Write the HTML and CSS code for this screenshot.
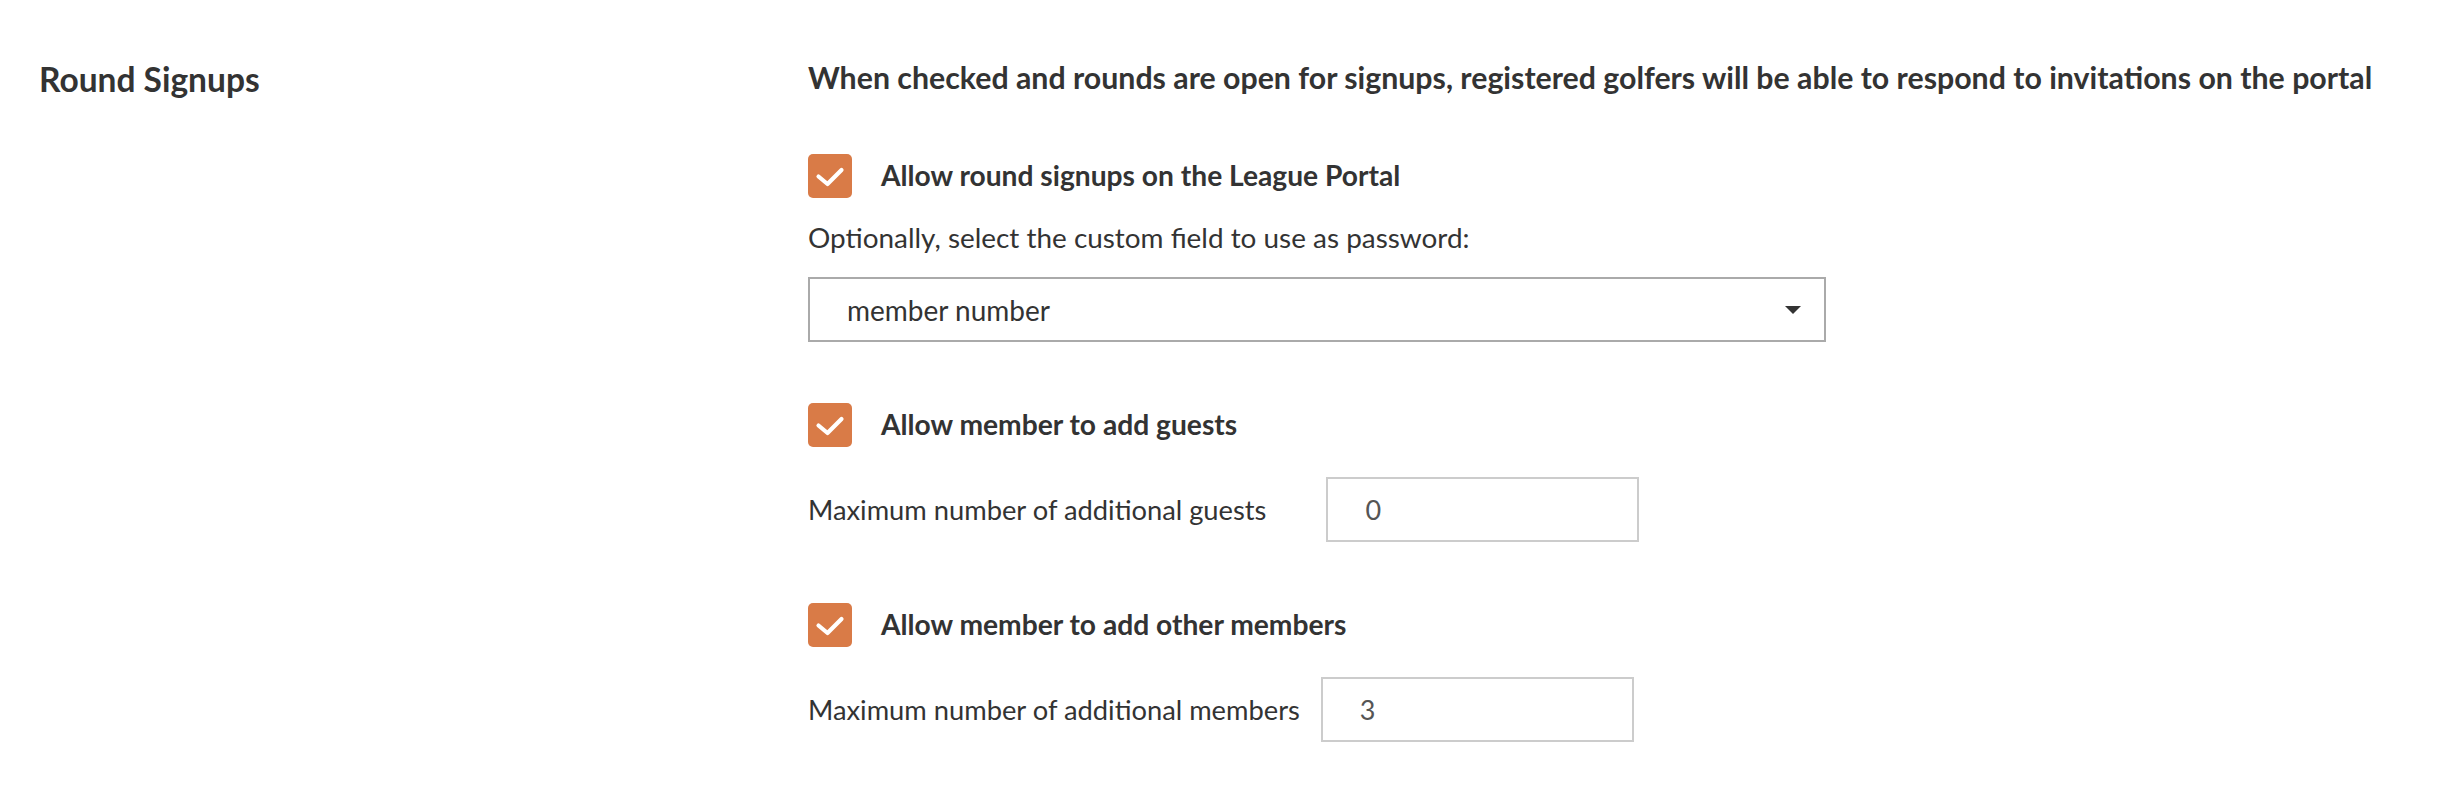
FILE: index.html
```html
<!DOCTYPE html>
<html lang="en">
<head>
<meta charset="utf-8">
<title>Round Signups</title>
<link rel="stylesheet" href="styles.css">
</head>
<body>
<section class="settings-section">
  <h2 class="section-title">Round Signups</h2>
  <div class="section-body">
    <p class="section-desc">When checked and rounds are open for signups, registered golfers will be able to respond to invitations on the portal</p>

    <label class="check-row check-row--first">
      <span class="checkbox"><svg viewBox="0 0 44 44" width="44" height="44"><path d="M10.5 22.5 L19.5 30 L33.5 16" fill="none" stroke="#fff" stroke-width="4.2" stroke-linecap="round" stroke-linejoin="round"/></svg></span>
      <span class="check-label">Allow round signups on the League Portal</span>
    </label>
    <p class="field-hint">Optionally, select the custom field to use as password:</p>
    <div class="select-box">
      <span class="select-value">member number</span>
      <span class="select-arrow"></span>
    </div>

    <label class="check-row">
      <span class="checkbox"><svg viewBox="0 0 44 44" width="44" height="44"><path d="M10.5 22.5 L19.5 30 L33.5 16" fill="none" stroke="#fff" stroke-width="4.2" stroke-linecap="round" stroke-linejoin="round"/></svg></span>
      <span class="check-label">Allow member to add guests</span>
    </label>
    <div class="number-row">
      <span class="number-label">Maximum number of additional guests</span>
      <input class="number-input number-input--guests" type="text" value="0">
    </div>

    <label class="check-row">
      <span class="checkbox"><svg viewBox="0 0 44 44" width="44" height="44"><path d="M10.5 22.5 L19.5 30 L33.5 16" fill="none" stroke="#fff" stroke-width="4.2" stroke-linecap="round" stroke-linejoin="round"/></svg></span>
      <span class="check-label">Allow member to add other members</span>
    </label>
    <div class="number-row">
      <span class="number-label">Maximum number of additional members</span>
      <input class="number-input number-input--members" type="text" value="3">
    </div>
  </div>
</section>
</body>
</html>
```

FILE: styles.css
```css
html, body {
  margin: 0;
  padding: 0;
  background: #ffffff;
}

body {
  font-family: "Lato", "Noto Sans", sans-serif;
  color: #333333;
}

.settings-section {
  display: flex;
  align-items: flex-start;
  padding: 61px 0 0 39px;
}

.section-title {
  width: 769px;
  flex: none;
  margin: 0;
  font-size: 33.5px;
  line-height: 36px;
  font-weight: 700;
  color: #333333;
}

.section-body {
  flex: 1;
  display: flex;
  flex-direction: column;
  align-items: flex-start;
}

.section-desc {
  margin: 0;
  font-size: 30.3px;
  line-height: 32px;
  font-weight: 700;
  color: #333333;
}

.check-row {
  display: flex;
  align-items: center;
  gap: 29px;
  margin-top: 61px;
}

.checkbox {
  width: 44px;
  height: 44px;
  border-radius: 5px;
  background: #d97b47;
  display: flex;
  flex: none;
}

.check-label {
  font-size: 28.2px;
  line-height: 32px;
  padding-bottom: 3px;
  font-weight: 700;
  color: #333333;
}

.field-hint {
  margin: 23px 0 0;
  font-size: 27.9px;
  line-height: 32px;
  font-weight: 400;
  color: #333333;
}

.select-box {
  margin-top: 24px;
  box-sizing: border-box;
  width: 1018px;
  height: 65px;
  border: 2px solid #aaaaaa;
  display: flex;
  align-items: center;
  justify-content: space-between;
  padding: 0 23px 0 37px;
}

.select-value {
  font-size: 28px;
  color: #333333;
}

.select-arrow {
  width: 0;
  height: 0;
  border-left: 8px solid transparent;
  border-right: 8px solid transparent;
  border-top: 8px solid #333333;
}

.number-row {
  display: flex;
  align-items: center;
  margin-top: 30px;
}

.number-label {
  font-size: 27.3px;
  line-height: 32px;
  color: #333333;
}

.number-input {
  box-sizing: border-box;
  width: 313px;
  height: 65px;
  border: 2px solid #cccccc;
  border-radius: 0;
  padding: 0 0 0 37px;
  font-family: "Lato", "Noto Sans", sans-serif;
  font-size: 27px;
  color: #555555;
  background: #ffffff;
  outline: none;
}

.number-input--guests {
  margin-left: 60px;
}

.number-input--members {
  margin-left: 21px;
}
```
